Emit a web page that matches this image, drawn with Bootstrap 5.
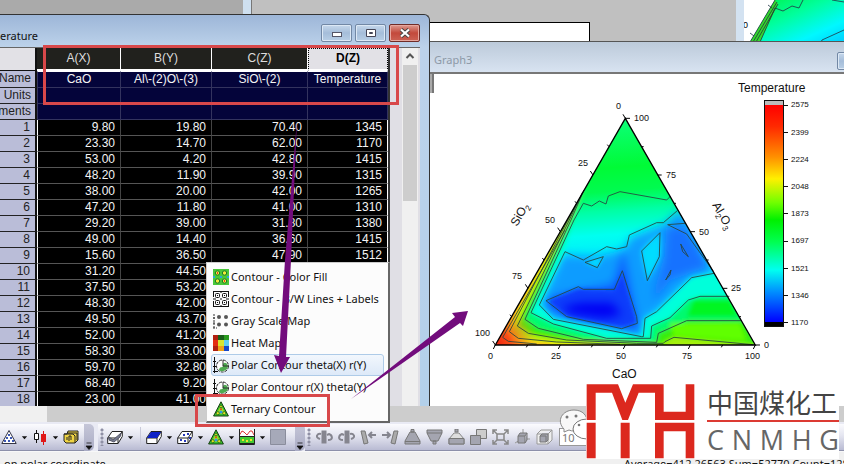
<!DOCTYPE html>
<html lang="en">
<head>
<meta charset="utf-8">
<meta name="viewport" content="width=device-width, initial-scale=1">
<title>Ternary contour worksheet</title>
<link href="https://cdn.jsdelivr.net/npm/bootstrap@5.3.0/dist/css/bootstrap.min.css" rel="stylesheet">
<style>
  body { font-family: "Noto Sans", "Liberation Sans", sans-serif; font-size: 11px; line-height: 16px; background: #f0f0f0; color: #111; }
  .desktop { background: #c0c0c0; }
  .back-pane { background: #aaa; width: 251px; height: 60px; left: 0; top: 0; border-right: 8px solid #cfe0f0; box-shadow: 1px 0 #777; }
  .back-page { left: 400px; top: 22px; width: 190px; height: 60px; background: #fff; border: 1px solid #000; }
  .back-graph { right: 0; top: 0; width: 108px; height: 60px; background: #fff; border-left: 8px solid #d3e2f1; }
  .win-sheet { left: -4px; top: 14px; bottom: 0; width: 434px; border: 1px solid #333; border-bottom: 0; border-top-right-radius: 6px; background: linear-gradient(#9db6d8, #bcd2ea 32px, #b3d0ea); z-index: 3; }
  .win-sheet .titlebar { height: 32px; padding: 9px 9px 0 3px; }
  .win-btn { width: 31px; height: 18px; border: 1px solid #7288a5; border-radius: 2px; padding: 0; background: linear-gradient(#c6d8ec, #a5bdd9 50%, #b9cfe6); line-height: 0; box-shadow: inset 0 0 0 1px #dce8f5; }
  .win-btn.shut { background: linear-gradient(#dd9a90, #c3493b 50%, #cc6254); border-color: #702c28; box-shadow: inset 0 0 0 1px #e6a79e; }
  .sheet-body { margin-right: 9px; background: #e0dfe5; border-top: 1px solid #666; }
  .sheet { width: 393px; table-layout: fixed; border-collapse: separate; border-spacing: 0; font-family: "Liberation Sans", Arial, sans-serif; font-size: 12px; background: #000; color: #f4f4f4; border-right: 2px solid #333; }
  .sheet th, .sheet td { font-weight: 400; padding: 0 5px; height: 16px; line-height: 15px; white-space: nowrap; overflow: hidden; }
  .sheet th[scope=row] { background: #babdd8; color: #222; text-align: right; border-bottom: 1px solid #222; border-right: 2px solid #111; }
  .sheet td { text-align: right; border-right: 1px solid #444; border-bottom: 1px solid #555; }
  .sheet td:nth-child(2) { border-left: 1px solid #fff; }
  .sheet td:last-child { border-right: 1px solid #fff; }
  .sheet thead th { height: 23px; text-align: center; background: #21211d; color: #ddd; border-right: 1px solid #fff; border-bottom: 2px solid #fff; }
  .sheet thead td { background: #e2e1e6; border-right: 2px solid #111; border-bottom: 1px solid #111; }
  .sheet thead th.picked { background: #e2e1e6; color: #000; font-weight: 700; border: 1px dotted #000; border-bottom: 2px solid #fff; }
  .sheet .meta td { background: #04043a; text-align: center; border-color: #33335e; padding: 0 2px; }
  .sheet .meta th { padding: 0 4px 0 0; }
  .sheet .meta:first-child th, .sheet .meta:first-child td { height: 17px; }
  .sheet .meta:first-child td { border-top: 1px solid #fff; }
  .vscroll { width: 16px; background: #f0f0f0; margin-right: 2px; }
  .vscroll .up { height: 17px; line-height: 0; border: 0; background: none; padding: 0; }
  .vscroll .thumb { height: 136px; margin: 0 1px; background: #cdcdcd; }
  .win-graph { left: 424px; right: -26px; top: 41px; bottom: 0; background: #fff; z-index: 2; border-top: 1px solid #555; }
  .win-graph .titlebar { height: 32px; padding: 10px 2px 4px 10px; color: #8d99a7; background: linear-gradient(#bccada, #d8e3f1); border-bottom: 2px solid #777; }
  .plot { width: 420px; height: 332px; display: block; flex: none; }
  svg text { font-family: "Liberation Sans", Arial, sans-serif; }
  .layer-tab { width: 10px; height: 19px; border-left: 6px solid #fff; background: #aaa; border-right: 2px solid #777; }
  .hscroll { height: 16px; background: #cdcdcd; }
  .hscroll .left-end { width: 47px; background: #f0f0f0; }
  .tools { height: 30px; background: #e9eaf4; border-bottom: 1px solid #f8f8f8; padding-top: 2px; }
  .tool-group { height: 27px; background: linear-gradient(#fbfbfe, #e4e5f0 45%, #b9bbd3); border-bottom: 1px solid #8d90aa; }
  .tool-group button, .chip { border: 0; padding: 0; background: none; line-height: 0; height: 27px; }
  .tool-group .ic { width: 18px; }
  .tool-group .ic svg { width: 16px; height: 16px; }
  .tool-group .dd { width: 13px; }
  .tool-group .wide { width: 22px; }
  .chip { width: 10px; background: linear-gradient(#c5c6d8, #a9abc4); border-radius: 0 5px 5px 0; }
  .grip { width: 4px; height: 18px; margin: 0 2px; background: radial-gradient(circle, #8f90a5 1px, transparent 2px) 0 0 / 4px 4px; }
  .rule { width: 1px; height: 20px; background: #c9cada; margin: 0 4px 0 3px; }
  .size-box { width: 60px; height: 18px; border: 1px solid #999; padding: 0 2px; color: #777; background: #fff; }
  .status { height: 12px; background: #f0f0f0; overflow: hidden; line-height: 12px; padding: 6px 0 0 4px; white-space: nowrap; }
  .status .sum { width: 220px; }
  .popup { left: 206px; top: 262px; width: 184px; height: 161px; background: #fcfcfc; border: 1px solid #999; border-width: 1px 2px 2px 1px; border-color: #ccc #666 #666 #ccc; z-index: 6; padding: 3px 4px 0; }
  .popup button { height: 22px; flex: none; border: 1px solid transparent; border-radius: 3px; background: none; padding: 0 0 0 1px; font-size: 11px; white-space: nowrap; color: #111; }
  .popup button.hot { background: linear-gradient(#f2f7fd, #dde9f8); border-color: #aecbe8; }
  .popup svg { width: 16px; height: 16px; margin-right: 2px; flex: none; }
  .frame { border: 3px solid #d8484a; z-index: 8; pointer-events: none; }
  .frame-head { left: 43px; top: 45px; width: 356px; height: 60px; }
  .frame-item { left: 195px; top: 394px; width: 135px; height: 33px; }
  .arrows { left: 0; top: 0; z-index: 9; pointer-events: none; }
  .brand { right: 5px; bottom: 5px; width: 253px; height: 75px; background: #fff; z-index: 5; }
  .brand-names { width: 132px; margin-left: 12px; }
  .brand-cn { font: 400 26px/32px "Noto Sans CJK SC", sans-serif; color: #444; border-bottom: 2px solid #dc3a32; padding: 2px 0; white-space: nowrap; }
  .brand-en { font: 400 27px/36px "Open Sans", "Noto Sans", sans-serif; color: #666; }
  .faces { right: 257px; bottom: 18px; z-index: 4; }
</style>
<script src="https://cdn.jsdelivr.net/npm/bootstrap@5.3.0/dist/js/bootstrap.bundle.min.js"></script>
</head>
<body>
<svg width="0" height="0" class="position-absolute" aria-hidden="true">
  <symbol id="tri" viewBox="0 0 16 16"><path d="M8 .8 15.4 15H.6z" fill="#35c52d" stroke="#173c10"/><path d="M8 4l4.500 9h-9z" fill="#a5d822"/><g fill="#e8e020" stroke="#176d20" stroke-width=".8"><circle cx="8" cy="5.500" r="1.300"/><circle cx="4.800" cy="12.200" r="1.600"/><circle cx="11.200" cy="12.200" r="1.600"/></g><circle cx="8" cy="11" r="1.500" fill="#2d9be0"/><circle cx="8" cy="8.200" r=".9" fill="#e03a1c"/></symbol>
  <symbol id="polar" viewBox="0 0 16 16"><path d="M1.500 0v16M0 14.500h5M0 4.500h3M0 9.500h3" stroke="#111" fill="none"/><circle cx="9.500" cy="9" r="6" fill="#fff" stroke="#222" stroke-dasharray="3 1"/><path d="M6 13c1-5 4-1 4-5 0-3 4-3 5 1 0 4-6 7-9 4z" fill="#4eab50"/><path d="M10 3v6h6" stroke="#333" fill="none"/></symbol>
  <symbol id="box" viewBox="0 0 16 16"><path d="M.7 9 5 2.500h10.300v5L11 14.500H.7z" fill="#fff" stroke="#222"/><path d="M.7 9H11l4.300-6.500M11 9v5.500" fill="none" stroke="#222"/></symbol>
  <symbol id="caret" viewBox="0 0 8 5"><path d="M1 1h6L4 4.500z" fill="#111"/></symbol>
  <symbol id="more" viewBox="0 0 8 8"><path d="M1.500 1h5M1 4h6L4 7.500z" fill="#111" stroke="#111" stroke-width=".8"/></symbol>
</svg>

<div class="vh-100 d-flex flex-column overflow-hidden position-relative">
  <main class="desktop flex-grow-1 position-relative overflow-hidden">
    <div class="back-pane position-absolute"></div>
    <div class="back-page position-absolute"></div>
    <div class="back-graph position-absolute">
      <svg width="100" height="42" viewBox="744 0 100 42" class="d-block">
        <defs><linearGradient id="bk" x1="0" y1="0" x2="1" y2="1"><stop offset="0" stop-color="#00f040"/><stop offset=".4" stop-color="#00ff9c"/><stop offset=".75" stop-color="#00f8ff"/><stop offset="1" stop-color="#00cfff"/></linearGradient></defs>
        <path d="M775 0 750 42h94V0z" fill="url(#bk)"/><path d="M775 0 750 42h10L778 4z" fill="#35d82c"/>
        <path d="M775 0 750 42M777 2 753 42M778 4 756 42M760 42 775 8 783 11 792 6 799 8 803 0M832 0l12 2M821 42l1-2 22-10M750 33l4 3M768 5l4 3" fill="none" stroke="#234" stroke-width=".8"/>
        <text x="743" y="28" font-size="9">0</text>
      </svg>
    </div>

    <section class="win-sheet position-absolute d-flex flex-column" aria-label="Worksheet">
      <header class="titlebar d-flex align-items-start">
        <span class="flex-grow-1 pt-1">erature</span>
        <div class="d-flex" style="gap:3px">
          <button class="win-btn" aria-label="Minimize"><svg width="14" height="10"><rect x="2.500" y="4.500" width="9" height="4" fill="#fff" stroke="#556"/></svg></button>
          <button class="win-btn" aria-label="Maximize"><svg width="12" height="10"><path d="M1.500 1.500h9v7h-9zM4.500 4.500h3v1h-3z" fill="#fff" stroke="#445"/></svg></button>
          <button class="win-btn shut" aria-label="Close"><svg width="12" height="10"><path d="M2 1.500l8 7M10 1.500l-8 7" stroke="#444" stroke-width="4"/><path d="M2 1.500l8 7M10 1.500l-8 7" stroke="#fff" stroke-width="2.200"/></svg></button>
        </div>
      </header>
      <div class="sheet-body d-flex flex-grow-1 overflow-hidden">
        <div class="flex-grow-1">
          <table class="sheet">
            <colgroup><col style="width:40px"><col style="width:84px"><col style="width:91px"><col style="width:96px"><col></colgroup>
            <thead><tr><td></td><th scope="col">A(X)</th><th scope="col">B(Y)</th><th scope="col">C(Z)</th><th scope="col" class="picked">D(Z)</th></tr></thead>
            <tbody id="rows">
              <tr class="meta"><th scope="row">Name</th><td>CaO</td><td>Al\-(2)O\-(3)</td><td>SiO\-(2)</td><td>Temperature</td></tr>
              <tr class="meta"><th scope="row">Units</th><td></td><td></td><td></td><td></td></tr>
              <tr class="meta"><th scope="row">ments</th><td></td><td></td><td></td><td></td></tr>
            </tbody>
          </table>
        </div>
        <div class="vscroll d-flex flex-column">
          <button class="up" aria-label="Scroll up"><svg width="10" height="8"><path d="M1.500 6 5 2.500 8.500 6" fill="none" stroke="#555" stroke-width="2"/></svg></button>
          <div class="thumb"></div>
        </div>
      </div>
    </section>

    <section class="win-graph position-absolute overflow-hidden" aria-label="Graph3">
      <header class="titlebar d-flex"><span class="flex-grow-1">Graph3</span><button class="win-btn" aria-label="Minimize graph"></button></header>
      <div class="d-flex">
        <div class="layer-tab"></div>
        <svg class="plot" viewBox="434 74 420 332" role="img" aria-label="Ternary contour plot">
          <defs>
            <clipPath id="tc"><path d="M466-305 856 375H76z"/></clipPath>
            <filter id="b5" x="-30%" y="-30%" width="160%" height="160%"><feGaussianBlur stdDeviation="6"/></filter>
            <filter id="b14" x="-50%" y="-50%" width="200%" height="200%"><feGaussianBlur stdDeviation="14"/></filter>
            <linearGradient id="base" gradientUnits="userSpaceOnUse" x1="450" y1="-305" x2="480" y2="110"><stop offset="0" stop-color="#0cff7a"/><stop offset=".35" stop-color="#00fb36"/><stop offset=".52" stop-color="#00fb50"/><stop offset=".66" stop-color="#00ffa4"/><stop offset=".83" stop-color="#00fff0"/><stop offset="1" stop-color="#00eaff"/></linearGradient>
            <radialGradient id="hot" gradientUnits="userSpaceOnUse" cx="76" cy="375" r="130"><stop offset="0" stop-color="#f02010"/><stop offset=".35" stop-color="#f85018"/><stop offset="1" stop-color="#ffb020" stop-opacity="0"/></radialGradient>
            <linearGradient id="scale" x2="0" y2="1"><stop offset="0" stop-color="#f00"/><stop offset=".1" stop-color="#ff2a00"/><stop offset=".24" stop-color="#ff9000"/><stop offset=".34" stop-color="#fff000"/><stop offset=".45" stop-color="#70ff00"/><stop offset=".53" stop-color="#00f000"/><stop offset=".63" stop-color="#00ff50"/><stop offset=".76" stop-color="#00fff0"/><stop offset=".86" stop-color="#0090ff"/><stop offset="1" stop-color="#0000ff"/></linearGradient>
          </defs>
          <g transform="translate(470 220) scale(.33333)">
            <g clip-path="url(#tc)">
              <path d="M466-320 880 400H60z" fill="url(#base)"/>
              <g filter="url(#b14)">
                <path d="M280 105 208 255 250 298 515 350 525 295 560 275 665 173 732 160 650-10 622-28 590 10 480 55 465 90 380 110z" fill="#109cff"/>
                <path d="M590 20 650 20 720 140 600 180 540 260 580 120z" fill="#1672ff"/>
                <path d="M460 80 500 290 510 340 230 270 240 230 430 190z" fill="#0c5cff"/>
                <path d="M525 90 565 50 560 110 535 160z" fill="#00e8ff"/>
                <path d="M500 160l20 120 35-40-30-120z" fill="#109cff"/>
              </g>
              <g filter="url(#b5)">
                <path d="M235 242 325 206 433 212 457 160 495 290 498 308 455 320 290 288z" fill="#0a3cfa"/>
                <path d="M515 93 570 38 568 110 532 182zM345 127l55-17-18 33z" fill="#00dcff"/>
                <path d="M342-100 285 95 208 255 250 298 515 350 525 295 560 275 665 173 732 160 760 190 880 400H50V375z" fill="#00ffda"/>
                <path d="M342-95 312 0 183 278 250 312 410 355H542L545 318 600 293 655 240 690 229H790L880 400H40V375z" fill="#00fa70"/>
                <path d="M342-90 303 0 165 298 205 325 340 358 560 367 565 340 650 302H820L880 400H40V375z" fill="#38ed08"/>
                <path d="M342-90 298 0 142 318 175 340 290 360 500 370 580 372 585 365 612 352 856 374 900 420H40V375z" fill="#a6f010"/>
                <path d="M320-50 293 0 118 335 145 355 260 366 450 374 450 420H40V375z" fill="#f4ed10"/>
                <path d="M230 105 98 352 115 364 240 373 240 420H40V375z" fill="#ffa31c"/>
                <path d="M600 310l210-2 20 55-220-16z" fill="#60ff00"/>
                <path d="M670 240h110l25 50H650z" fill="#00f624"/>
              </g>
              <path d="M275 262l60-14h90l30 35-50 12-100-14z" fill="#0505f4" filter="url(#b14)"/>
              <circle cx="76" cy="375" r="130" fill="url(#hot)"/>
            </g>
            <g fill="none" stroke="#27453f" stroke-width="2.600">
              <path d="M285 95 208 255 250 298 515 350H520L525 295 560 275 665 173 732 160M285 95 340 120 410 80 440 87 470 80 478 45 560 8 580 8 622-28"/>
              <path d="M602-72 590-60 450-85 415-72 408-48 388-57 365-42 340-50 312 0 183 278 250 312 410 355H542L545 318 600 293 655 240 690 229H778"/>
              <path d="M342-90 303 0 165 298 205 325 340 358 560 367 565 340 650 302H815M338-84 298 0 142 318 175 340 290 360 500 370H580L585 365 612 352 850 374M320-50 118 335 145 355 260 366 450 373M285 30 98 352 115 364 200 372"/>
              <path d="M228 242 325 200 340 208H433L457 152 500 290 502 310 455 326 290 290zM345 127l55-17-18 33zM515 93l55-55-2 72-36 72zM632 72l23 38-17-15zM587 180l16-30-3 15zM645 10l-52 4 57 28 80 112"/>
            </g>
            <path d="M466-305 856 375H76z" fill="none" stroke="#000" stroke-width="4"/>
            <path d="M466-305l-7-12M466-305h14M417-220l-5-6M369-135l-8-12M320-50l-5-6M271 35l-8-12M222 120l-5-6M174 205l-8-12M125 290l-5-6M76 375l-8-12M515-220h6M563-135h12M612-50h6M661 35h14M710 120h6M758 205h14M807 290h6M856 375h14M76 375l-6 12M173 375l-4 7M271 375l-6 12M368 375l-4 7M466 375l-6 12M563 375l-4 7M661 375l-6 12M758 375l-4 7M856 375l-6 12" fill="none" stroke="#000" stroke-width="3"/>
          </g>
          <g font-size="9" fill="#111">
            <text x="616" y="109">0</text><text x="634" y="121">100</text>
            <text x="578" y="166">25</text><text x="666" y="178">75</text>
            <text x="545" y="223">50</text><text x="699" y="235">50</text>
            <text x="512" y="279">75</text><text x="731" y="291">25</text>
            <text x="475" y="336">100</text><text x="764" y="348">0</text>
            <text x="488" y="359">0</text><text x="551" y="359">25</text><text x="616" y="359">50</text><text x="682" y="359">75</text><text x="745" y="359">100</text>
          </g>
          <g font-size="12" fill="#111">
            <text x="612" y="378">CaO</text>
            <text x="738" y="92">Temperature</text>
            <text transform="translate(517 227) rotate(-60)">SiO<tspan font-size="8" dy="3">2</tspan></text>
            <text transform="translate(712 205) rotate(60)">Al<tspan font-size="8" dy="3">2</tspan><tspan dy="-3">O</tspan><tspan font-size="8" dy="3">3</tspan></text>
          </g>
          <rect x="764.500" y="100.500" width="19" height="226" fill="#000"/>
          <rect x="765" y="101" width="18" height="4" fill="#bbb"/>
          <rect x="765" y="105" width="18" height="217" fill="url(#scale)"/>
          <rect x="764.500" y="100.500" width="19" height="226" fill="none" stroke="#111"/>
          <path d="M784 105.500h4M784 132.500h4M784 159.500h4M784 186.500h4M784 213.500h4M784 241.500h4M784 268.500h4M784 295.500h4M784 322.500h4" stroke="#111"/>
          <g font-size="8" fill="#111">
            <text x="791" y="107">2575</text><text x="791" y="135">2399</text><text x="791" y="162">2224</text><text x="791" y="189">2048</text><text x="791" y="216">1873</text><text x="791" y="243">1697</text><text x="791" y="271">1521</text><text x="791" y="298">1346</text><text x="791" y="325">1170</text>
          </g>
        </svg>
      </div>
    </section>
  </main>

  <div class="hscroll d-flex"><div class="left-end"></div></div>

  <div class="tools d-flex overflow-hidden" role="toolbar" aria-label="Plot tools">
    <div class="tool-group d-flex align-items-center pe-1">
      <button class="ic" aria-label="Ternary"><svg viewBox="0 0 16 16"><path d="M8 1.500 15.200 14.500H.8z" fill="#fff" stroke="#334"/><path d="M7 5h2v2H7zM5 8h2v2H5zM9 8h2v2H9zM3 11h2v2H3zM7 11h2v2H7zM11 11h2v2h-2z" fill="#3d58b5"/></svg></button>
      <button class="dd" aria-label="Ternary options"><svg width="7" height="5"><use href="#caret"/></svg></button>
      <button class="ic" aria-label="Candlestick"><svg viewBox="0 0 16 16"><path d="M4.500 1v13" stroke="#111"/><path d="M2.500 4.500h4v6h-4z" fill="#fff" stroke="#111"/><path d="M11.500 2v14" stroke="#d11"/><path d="M9 5h5v8H9z" fill="#e01818"/></svg></button>
      <button class="dd" aria-label="Candlestick options"><svg width="7" height="5"><use href="#caret"/></svg></button>
      <button class="ic" aria-label="Template library"><svg viewBox="0 0 16 16"><path d="M1 5h3l1-3h10v9l-3 3H3L1 12z" fill="#efd443" stroke="#222"/><path d="M1 5h9l2 2v7M4 4h10v7" fill="none" stroke="#222"/><path d="M4 11V8M6 12V7h2v4" fill="none" stroke="#222"/></svg></button>
    </div>
    <button class="chip me-1 pt-3" aria-label="More 2D plots"><svg width="8" height="8"><use href="#more"/></svg></button>
    <div class="tool-group d-flex align-items-center pe-2">
      <span class="grip"></span>
      <button class="ic" aria-label="3D surface"><svg viewBox="0 0 16 16"><use href="#box"/><path d="M2 8l4 3 8-7-1 4-6 5-5-2z" fill="#777d92" stroke="#556"/></svg></button>
      <button class="dd" aria-label="3D surface options"><svg width="7" height="5"><use href="#caret"/></svg></button>
      <span class="rule"></span>
      <button class="ic" aria-label="3D plane"><svg viewBox="0 0 16 16"><use href="#box"/><path d="M1 9 5 3h10l-4 6z" fill="#0d22c7"/></svg></button>
      <button class="dd" aria-label="3D plane options"><svg width="7" height="5"><use href="#caret"/></svg></button>
      <button class="ic" aria-label="3D scatter"><svg viewBox="0 0 16 16"><use href="#box"/><path d="M3 10h2v2H3zM7 11h2v2H7zM6 5h2v2H6zM10 4h2v2h-2zM12 8h2v2h-2z" fill="#2638b8"/></svg></button>
      <button class="dd" aria-label="3D scatter options"><svg width="7" height="5"><use href="#caret"/></svg></button>
      <button class="ic" aria-label="Contour"><svg><use href="#tri"/></svg></button>
      <button class="dd" aria-label="Contour options"><svg width="7" height="5"><use href="#caret"/></svg></button>
      <button class="ic" aria-label="Profile"><svg viewBox="0 0 16 16"><path d="M.5.5h15v7H.5z" fill="#fff"/><path d="M.5 6 3 2l2 1 3 3 3-4 2 0 2 4" fill="none" stroke="#d33"/><path d="M.5 0v15.500h15V0" fill="none" stroke="#222"/><path d="M.5 7.500h15v7H.5z" fill="#43c930" stroke="#222"/><path d="M3 10h2v2H3zM7 11h2v2H7zM11 10h2v2h-2z" fill="#eee52b"/></svg></button>
      <button class="dd" aria-label="Profile options"><svg width="7" height="5"><use href="#caret"/></svg></button>
      <button class="ic" aria-label="Image plot"><svg viewBox="0 0 16 16"><path d="M.5.5h15v15H.5z" fill="#a6a9b9" stroke="#8a8d9c"/></svg></button>
    </div>
    <button class="chip pt-3" aria-label="More 3D plots"><svg width="8" height="8"><use href="#more"/></svg></button>
    <div class="tool-group d-flex align-items-center flex-grow-1">
      <span class="grip"></span>
      <button class="wide" aria-label="Rotate counterclockwise"><svg width="17" height="16"><path d="M5.500 1.500h5v13h-5z" fill="#85858f"/><path d="M4 10C-2 8 2 4 5 5M12 11c6 0 4-5 1-6l-2 1" fill="none" stroke="#85858f" stroke-width="2"/></svg></button>
      <button class="wide" aria-label="Rotate clockwise"><svg width="17" height="16"><path d="M6.500 1.500h5v13h-5z" fill="#85858f"/><path d="M13 10c6-2 2-6-1-5M5 11c-6 0-4-5-1-6l2 1" fill="none" stroke="#85858f" stroke-width="2"/></svg></button>
      <button class="wide" aria-label="Tilt left"><svg width="17" height="16"><path d="M1 2h4l3 12-4 1z" fill="#aaa" stroke="#777"/><path d="M16 6H9M12 3 9 6l3 3" fill="none" stroke="#85858f" stroke-width="2"/></svg></button>
      <button class="wide" aria-label="Tilt right"><svg width="17" height="16"><path d="M12 2h4l-3 13-4-1z" fill="#aaa" stroke="#777"/><path d="M0 6h8M5 3l3 3-3 3" fill="none" stroke="#85858f" stroke-width="2"/></svg></button>
      <button class="wide" aria-label="Tilt up"><svg width="17" height="16"><path d="M6 3h5l5 9v3H1v-3zM1 12.500h15M7 .5h3V3H7z" fill="#a4a5b0" stroke="#777"/></svg></button>
      <button class="wide" aria-label="Tilt down"><svg width="17" height="16"><path d="M1 1h15v3l-4 8H5L1 4zM1 4h15M7 12h3v3H7z" fill="#a4a5b0" stroke="#777"/></svg></button>
      <button class="wide" aria-label="Increase perspective"><svg width="17" height="16"><path d="M6 4h5l5 6v5H1v-5z" fill="#ddd" stroke="#888"/><path d="M1 9.500h15V15H1zM7 0h3v3H7z" fill="#a4a5b0" stroke="#777"/></svg></button>
      <button class="wide" aria-label="Decrease perspective"><svg width="17" height="16"><path d="M6.500.5h10v9h-10z" fill="#ccc" stroke="#777"/><path d="M.5 6.500h10v9H.5z" fill="#a4a5b0" stroke="#777"/></svg></button>
      <button class="wide" aria-label="Fit frame"><svg width="17" height="16"><path d="M5 5h7v6H5zM1 1l4 4M16 1l-4 4M1 15l4-4M16 15l-4-4M1 5V1h4M12 1h4v4M1 11v4h4M12 15h4v-4" fill="none" stroke="#888" stroke-width="1.500"/></svg></button>
      <button class="wide" aria-label="Reset rotation"><svg width="17" height="16"><path d="M9 0v6M1 14l5-3M16 10h-4" stroke="#999"/><path d="M4 7h7v7H4zM4 7l2-3h7l-2 3M13 4v7l-2 3" fill="#a4a5b0" stroke="#777"/></svg></button>
      <button class="wide" aria-label="Reset all"><svg width="17" height="16"><path d="M1 5 5 1h11v10l-4 4H1zM1 5h11l4-4M12 5v10" fill="#eee" stroke="#999"/><path d="M4 7h6v6H4zM4 7l2-2h6v6l-2 2" fill="#a4a5b0" stroke="#777"/></svg></button>
      <input class="size-box ms-1" aria-label="Rotation angle" value="10">
    </div>
  </div>

  <footer class="status d-flex justify-content-between">
    <span>on polar coordinate</span><span class="sum">Average=412.26563 Sum=52770 Count=128</span>
  </footer>

  <svg class="faces position-absolute" width="30" height="40" viewBox="557 406 30 40" aria-hidden="true"><path d="M564 429c-8-8-2-19 10-19 9 0 13 6 13 11-1 8-12 12-18 9l-5 2z" fill="#f8f8f8" stroke="#888"/><ellipse cx="587" cy="429" rx="14" ry="10" fill="#fff" stroke="#777"/><g fill="#777"><circle cx="567" cy="417" r="1.500"/><circle cx="576" cy="416" r="1.500"/><circle cx="579" cy="425" r="1.300"/></g></svg>

  <div class="brand position-absolute d-flex">
    <svg width="109" height="75" viewBox="76 74 327 225" role="img" aria-label="MH logo" class="flex-shrink-0" fill="#dc281e"><path d="M78 182V75h94l22 55 23-55h92v82h66V75h26v107H283v-82h-49l-32 82h-17l-31-82h-49v82zM78 190h27v107H78zM180 190h27v107h-27zM283 190h118v107h-26v-81h-66v81h-26z"/></svg>
    <div class="brand-names">
      <div class="brand-cn">中国煤化工</div>
      <div class="brand-en d-flex justify-content-between"><span>C</span><span>N</span><span>M</span><span>H</span><span>G</span></div>
    </div>
  </div>

  <div class="popup position-absolute d-flex flex-column" role="menu">
    <button role="menuitem" class="d-flex align-items-center"><svg viewBox="0 0 16 16"><path d="M0 0h16v16H0z" fill="#49c83a"/><g fill="#f1e73a" stroke="#167a25"><circle cx="4.500" cy="4" r="2.200"/><circle cx="11.500" cy="4" r="2.200"/><circle cx="4.500" cy="12" r="2.200"/><circle cx="11.500" cy="12" r="2.200"/></g><path d="M7 7h2v2H7zM0 7h2v2H0zM14 7h2v2h-2z" fill="#2aa7d7"/><path d="M4 3h1v2H4zM11 11h1v2h-1z" fill="#e33"/></svg>Contour - Color Fill</button>
    <button role="menuitem" class="d-flex align-items-center"><svg viewBox="0 0 16 16" fill="none" stroke="#111"><path d="M0 .5h16M0 15.500h16M.5 0v6M.5 10v6M15.500 0v6M15.500 10v6M0 8h3M13 8h3M8 0v2M8 14v2M7 8h2"/><rect x="2.500" y="2.500" width="4" height="4" rx="1"/><rect x="9.500" y="2.500" width="4" height="4" rx="1"/><rect x="2.500" y="9.500" width="4" height="4" rx="1"/><rect x="9.500" y="9.500" width="4" height="4" rx="1"/><path d="M4 4.500h1M11 4.500h1M4 11.500h1M11 11.500h1"/></svg>Contour - B/W Lines + Labels</button>
    <button role="menuitem" class="d-flex align-items-center"><svg viewBox="0 0 16 16"><path d="M1 1v15M0 15h4M0 5h2M0 10h2" stroke="#333" stroke-dasharray="2 1"/><g fill="#555"><circle cx="6" cy="4" r="2"/><circle cx="13" cy="4" r="2"/><circle cx="6" cy="11.500" r="2"/><circle cx="13" cy="11.500" r="2"/></g></svg>Gray Scale Map</button>
    <button role="menuitem" class="d-flex align-items-center"><svg viewBox="0 0 16 16"><path d="M0 0h16v16H0z" fill="#b02010"/><path d="M5 0h6v5H5z" fill="#195f18"/><path d="M11 0h5v5h-5z" fill="#2a9b20"/><path d="M0 5h5v6H0z" fill="#e32c10"/><path d="M5 5h6v6H5z" fill="#d8e430"/><path d="M11 5h5v6h-5z" fill="#60cef0"/><path d="M5 11h6v5H5z" fill="#f0a018"/><path d="M11 11h5v5h-5z" fill="#1646c8"/></svg>Heat Map</button>
    <button role="menuitem" class="hot d-flex align-items-center"><svg><use href="#polar"/></svg>Polar Contour theta(X) r(Y)</button>
    <button role="menuitem" class="d-flex align-items-center"><svg><use href="#polar"/></svg>Polar Contour r(X) theta(Y)</button>
    <button role="menuitem" class="d-flex align-items-center"><svg><use href="#tri"/></svg>Ternary Contour</button>
  </div>
  <div class="frame frame-head position-absolute"></div>
  <div class="frame frame-item position-absolute"></div>
  <svg class="arrows position-absolute" width="480" height="410" aria-hidden="true" fill="#720c7c"><path d="M297 120 291 260 286 357 290 357 281 373 274 355 279 356 285 260z"/><path d="M351 399 455 317 452 313 468 311 463 326 460 323z"/></svg>
</div>
<script>
  const data = [
    ['9.80','19.80','70.40','1345'],['23.30','14.70','62.00','1170'],['53.00','4.20','42.80','1415'],
    ['48.20','11.90','39.90','1315'],['38.00','20.00','42.00','1265'],['47.20','11.80','41.00','1310'],
    ['29.20','39.00','31.80','1380'],['49.00','14.40','36.60','1415'],['15.60','36.50','47.90','1512'],
    ['31.20','44.50'],['37.50','53.20'],['48.30','42.00'],['49.50','43.70'],['52.00','41.20'],
    ['58.30','33.00'],['59.70','32.80'],['68.40','9.20'],['23.00','41.00']
  ];
  document.getElementById('rows').insertAdjacentHTML('beforeend', data.map((r, i) =>
    `<tr><th scope="row">${i + 1}</th>${[0, 1, 2, 3].map(c => `<td>${r[c] || ''}</td>`).join('')}</tr>`).join(''));
</script>
</body>
</html>
